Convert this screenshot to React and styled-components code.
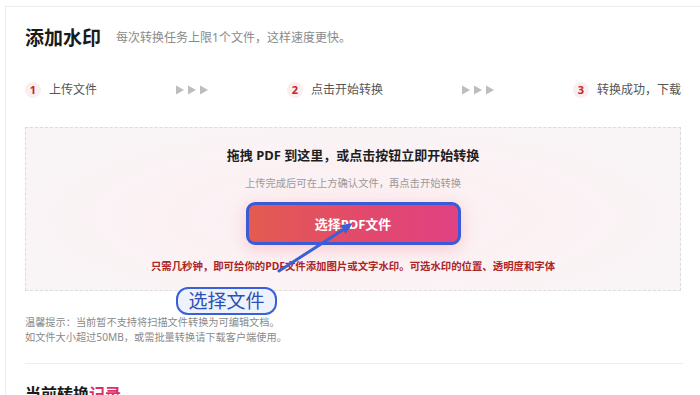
import React from 'react';
import styled, { createGlobalStyle } from 'styled-components';

const GlobalStyle = createGlobalStyle`
  body {
    margin: 0;
    background: #fff;
    overflow: hidden;
    font-family: "Noto Sans", "Noto Sans CJK SC", sans-serif;
  }
`;

const Page = styled.div`
  position: relative;
  width: 700px;
  height: 395px;
  overflow: hidden;
`;

const Card = styled.div`
  margin: 6px 0 0 5px;
  width: 700px;
  min-height: 420px;
  box-sizing: border-box;
  border-top: 1px solid #ececec;
  border-left: 1px solid #ececec;
  padding: 17px 0 0 19px;
`;

const Header = styled.div`
  display: flex;
  align-items: center;
  gap: 15px;
  height: 28px;
`;

const Title = styled.h1`
  margin: 0;
  font-size: 19px;
  line-height: 28px;
  font-weight: 700;
  color: #1a1a1a;
`;

const Subtitle = styled.span`
  font-size: 12px;
  color: #8a8a8a;
  line-height: 16px;
`;

const Steps = styled.div`
  display: flex;
  align-items: center;
  justify-content: space-between;
  width: 656px;
  height: 20px;
  margin-top: 28px;
`;

const Step = styled.div`
  display: flex;
  align-items: center;
  gap: 8px;
  font-size: 12px;
  color: #555;
  line-height: 16px;
`;

const StepNum = styled.span`
  display: inline-flex;
  align-items: center;
  justify-content: center;
  width: 16px;
  height: 16px;
  border-radius: 50%;
  background: #fbeeee;
  color: #c1272d;
  font-size: 11px;
  font-weight: 700;
`;

const DropZone = styled.div`
  margin-top: 27px;
  width: 656px;
  height: 164px;
  box-sizing: border-box;
  border: 1px dashed #dcdcdc;
  background: radial-gradient(ellipse 60% 70% at 50% 55%, #fdeef1 0%, #fbf2f4 55%, #f9f5f6 100%);
  display: flex;
  flex-direction: column;
  align-items: center;
  padding-top: 17px;
`;

const DropTitle = styled.div`
  font-size: 13px;
  font-weight: 700;
  color: #1e1e1e;
  line-height: 20px;
`;

const DropHint = styled.div`
  margin-top: 10px;
  font-size: 10.3px;
  color: #9a9a9a;
  line-height: 16px;
`;

const SelectButton = styled.button`
  margin-top: 11px;
  width: 215px;
  height: 43px;
  box-sizing: border-box;
  border: 3px solid #3b5bd6;
  border-radius: 9px;
  background: linear-gradient(90deg, #e35b50 0%, #e2496c 55%, #e04283 100%);
  color: #fff;
  font-family: inherit;
  font-size: 13px;
  font-weight: 700;
  cursor: pointer;
  box-shadow: 0 4px 16px rgba(235, 90, 110, 0.25);
`;

const Promo = styled.div`
  margin-top: 13px;
  font-size: 10.4px;
  font-weight: 700;
  color: #ac2628;
  line-height: 16px;
`;

const Tips = styled.div`
  margin-top: 24px;
  font-size: 10.2px;
  line-height: 15px;
  color: #8a8a8a;
`;

const Divider = styled.hr`
  margin: 18px 0 0;
  width: 658px;
  border: none;
  border-top: 1px solid #eeeeee;
`;

const RecordTitle = styled.h2`
  margin: 18px 0 0;
  font-size: 16px;
  line-height: 24px;
  font-weight: 700;
  color: #1a1a1a;
`;

const Accent = styled.span`
  color: #dc2f66;
`;

const Bubble = styled.div`
  position: absolute;
  left: 176px;
  top: 287px;
  width: 101px;
  height: 28px;
  box-sizing: border-box;
  border: 2px solid #3b5fd6;
  border-radius: 12px;
  background: #eef2fc;
  color: #2c4fb8;
  font-size: 19px;
  line-height: 24px;
  text-align: center;
`;

const Overlay = styled.svg`
  position: absolute;
  left: 0;
  top: 0;
  pointer-events: none;
`;

const Arrows = () => (
  <svg width="32" height="10" viewBox="0 0 32 10">
    {[0, 12, 24].map((x) => (
      <polygon key={x} points={`${x},0.5 ${x + 8},5 ${x},9.5`} fill="#bdbdbd" />
    ))}
  </svg>
);

const steps = ['上传文件', '点击开始转换', '转换成功，下载'];

export default function App() {
  return (
    <Page>
      <GlobalStyle />
      <Card>
        <Header>
          <Title>添加水印</Title>
          <Subtitle>每次转换任务上限1个文件，这样速度更快。</Subtitle>
        </Header>
        <Steps>
          {steps.map((s, i) => (
            <React.Fragment key={s}>
              {i > 0 && <Arrows />}
              <Step>
                <StepNum>{i + 1}</StepNum>
                {s}
              </Step>
            </React.Fragment>
          ))}
        </Steps>
        <DropZone>
          <DropTitle>拖拽 PDF 到这里，或点击按钮立即开始转换</DropTitle>
          <DropHint>上传完成后可在上方确认文件，再点击开始转换</DropHint>
          <SelectButton>选择PDF文件</SelectButton>
          <Promo>只需几秒钟，即可给你的PDF文件添加图片或文字水印。可选水印的位置、透明度和字体</Promo>
        </DropZone>
        <Tips>
          温馨提示：当前暂不支持将扫描文件转换为可编辑文档。
          <br />
          如文件大小超过50MB，或需批量转换请下载客户端使用。
        </Tips>
        <Divider />
        <RecordTitle>
          当前转换<Accent>记录</Accent>
        </RecordTitle>
      </Card>

      <Overlay width="700" height="395">
        <line x1="279" y1="271" x2="343.5" y2="229.5" stroke="#3b5fd6" strokeWidth="3" strokeLinecap="round" />
        <polygon points="353,223 345.6,233.7 340.2,225.3" fill="#3b5fd6" />
      </Overlay>
      <Bubble>选择文件</Bubble>
    </Page>
  );
}
